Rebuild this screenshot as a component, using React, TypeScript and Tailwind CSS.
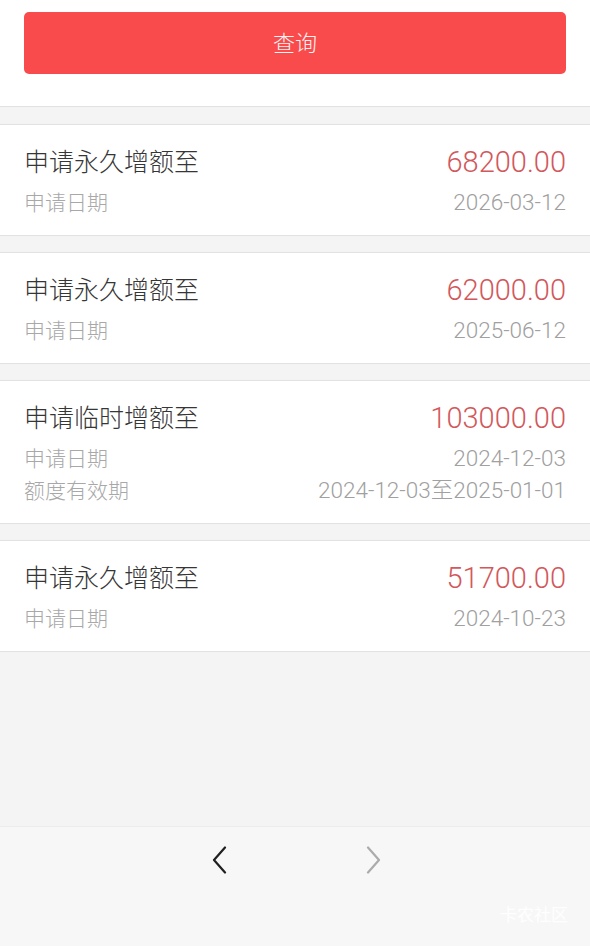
import React from "react";

type Record = {
  title: string;
  amount: string;
  date: string;
  validity?: string;
};

const records: Record[] = [
  { title: "申请永久增额至", amount: "68200.00", date: "2026-03-12" },
  { title: "申请永久增额至", amount: "62000.00", date: "2025-06-12" },
  {
    title: "申请临时增额至",
    amount: "103000.00",
    date: "2024-12-03",
    validity: "2024-12-03至2025-01-01",
  },
  { title: "申请永久增额至", amount: "51700.00", date: "2024-10-23" },
];

const font = {
  fontFamily: '"Liberation Sans", "Noto Sans CJK SC", sans-serif',
};

// digits look thin in the reference, Roboto Light is closest
const numFont = "font-['Roboto','Noto_Sans_CJK_SC',sans-serif] font-light";

function RecordCard({ item }: { item: Record }) {
  return (
    <div className="bg-white border-y border-[#e2e2e2] px-6 pt-[18px] pb-4 font-light">
      <div className="flex h-10 items-center justify-between">
        <span className="text-[25px] text-[#363636]">{item.title}</span>
        <span className={`${numFont} text-[29px] text-[#d2585c]`}>{item.amount}</span>
      </div>
      <div className="mt-1 flex h-8 items-center justify-between">
        <span className="text-[21px] text-[#a8a8a8]">申请日期</span>
        <span className={`${numFont} text-[22.5px] text-[#a0a0a0]`}>{item.date}</span>
      </div>
      {item.validity && (
        <div className="flex h-8 items-center justify-between">
          <span className="text-[21px] text-[#a8a8a8]">额度有效期</span>
          <span className={`${numFont} text-[22.5px] text-[#a0a0a0]`}>{item.validity}</span>
        </div>
      )}
    </div>
  );
}

export default function App() {
  return (
    <div
      className="flex h-[946px] w-[590px] flex-col overflow-hidden bg-[#f4f4f4]"
      style={font}
    >
      {/* Query button */}
      <div className="border-b border-[#e2e2e2] bg-white px-6 pt-3 pb-8">
        <button className="flex h-[62px] w-full items-center justify-center rounded-[5px] bg-[#f94b4b] text-[22px] font-light text-[#fff3f3]">
          查询
        </button>
      </div>

      {/* Records */}
      <div className="flex flex-1 flex-col gap-4 pt-[17px]">
        {records.map((r, i) => (
          <RecordCard key={i} item={r} />
        ))}
      </div>

      {/* Pager */}
      <div className="relative h-[120px] border-t border-[#ececec] bg-[#f7f7f7]">
        <div className="flex h-[66px] items-center justify-center gap-[137px] pl-[3px]">
          <svg width="16" height="28" viewBox="0 0 16 28" fill="none">
            <polyline
              points="13,1.5 2,14 13,26.5"
              stroke="#1f1f1f"
              strokeWidth="2.2"
              strokeLinecap="round"
              strokeLinejoin="round"
            />
          </svg>
          <svg width="16" height="28" viewBox="0 0 16 28" fill="none">
            <polyline
              points="3,1.5 14,14 3,26.5"
              stroke="#ababab"
              strokeWidth="2.2"
              strokeLinecap="round"
              strokeLinejoin="round"
            />
          </svg>
        </div>
        <span className="absolute right-[22px] bottom-[18px] text-[17px] text-white/90">
          卡农社区
        </span>
      </div>
    </div>
  );
}
